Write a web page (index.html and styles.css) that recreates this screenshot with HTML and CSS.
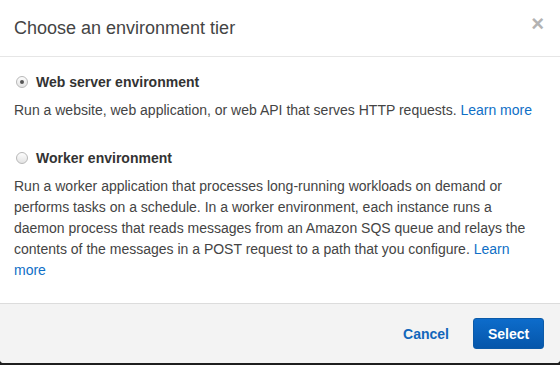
FILE: index.html
```html
<!DOCTYPE html>
<html lang="en">
<head>
    <meta charset="UTF-8">
    <meta name="viewport" content="width=device-width, initial-scale=1.0">
    <title>Choose an environment tier</title>
    <link rel="stylesheet" href="styles.css">
</head>
<body>
    <div class="modal">
        <div class="modal-header">
            <h2>Choose an environment tier</h2>
            <span class="close">&times;</span>
        </div>
        <div class="modal-body">
            <div class="option">
                <label class="option-label">
                    <span class="radio checked"></span>
                    Web server environment
                </label>
                <p>Run a website, web application, or web API that serves HTTP requests. <a href="#">Learn more</a></p>
            </div>
            <div class="option">
                <label class="option-label">
                    <span class="radio"></span>
                    Worker environment
                </label>
                <p>Run a worker application that processes long-running workloads on demand or performs tasks on a schedule. In a worker environment, each instance runs a daemon process that reads messages from an Amazon SQS queue and relays the contents of the messages in a POST request to a path that you configure. <a href="#">Learn more</a></p>
            </div>
        </div>
        <div class="modal-footer">
            <button class="btn-link">Cancel</button>
            <button class="btn-primary">Select</button>
        </div>
    </div>
</body>
</html>
```

FILE: styles.css
```css
body {
    margin: 0;
    font-family: "Liberation Sans", Arial, sans-serif;
    background-color: #1e1e1e;
    color: #444;
}

.modal {
    width: 560px;
    background-color: #fff;
    border-radius: 0 0 4px 4px;
    overflow: hidden;
}

.modal-header {
    height: 56px;
    padding: 0 14px;
    display: flex;
    align-items: center;
    justify-content: space-between;
    border-bottom: 1px solid #e6e6e6;
}

.modal-header h2 {
    margin: 0;
    font-size: 18px;
    font-weight: normal;
    color: #444;
}

.close {
    color: #b3b3b3;
    font-size: 22px;
    font-weight: bold;
    line-height: 1;
    margin-right: 2px;
    margin-top: -8px;
}

.modal-body {
    padding: 14px 20px 22px 14px;
}

.option + .option {
    margin-top: 26px;
}

.option-label {
    display: flex;
    align-items: center;
    gap: 8px;
    height: 21px;
    font-size: 14px;
    font-weight: bold;
    color: #333;
}

.radio {
    width: 10px;
    height: 10px;
    margin-left: 2px;
    border: 1px solid #b8b8b8;
    border-radius: 50%;
    background: linear-gradient(#fdfdfd, #e3e3e3);
    display: flex;
    align-items: center;
    justify-content: center;
}

.radio.checked::after {
    content: "";
    width: 4px;
    height: 4px;
    border-radius: 50%;
    background-color: #555;
}

.option p {
    margin: 8px 0 0;
    font-size: 14px;
    line-height: 21px;
}

.option a {
    color: #0f6fc6;
    text-decoration: none;
}

.modal-footer {
    height: 31px;
    padding: 14px 16px;
    display: flex;
    justify-content: flex-end;
    align-items: center;
    gap: 24px;
    background-color: #f3f3f3;
    border-top: 1px solid #dcdcdc;
}

.btn-link {
    border: none;
    background: none;
    padding: 0;
    font-family: inherit;
    font-size: 14px;
    font-weight: bold;
    color: #1166bb;
}

.btn-primary {
    height: 31px;
    width: 71px;
    border: 1px solid #0b5aa8;
    border-radius: 3px;
    background: linear-gradient(#0d6ccb, #0556aa);
    color: #fff;
    font-family: inherit;
    font-size: 14px;
    font-weight: bold;
}
```
